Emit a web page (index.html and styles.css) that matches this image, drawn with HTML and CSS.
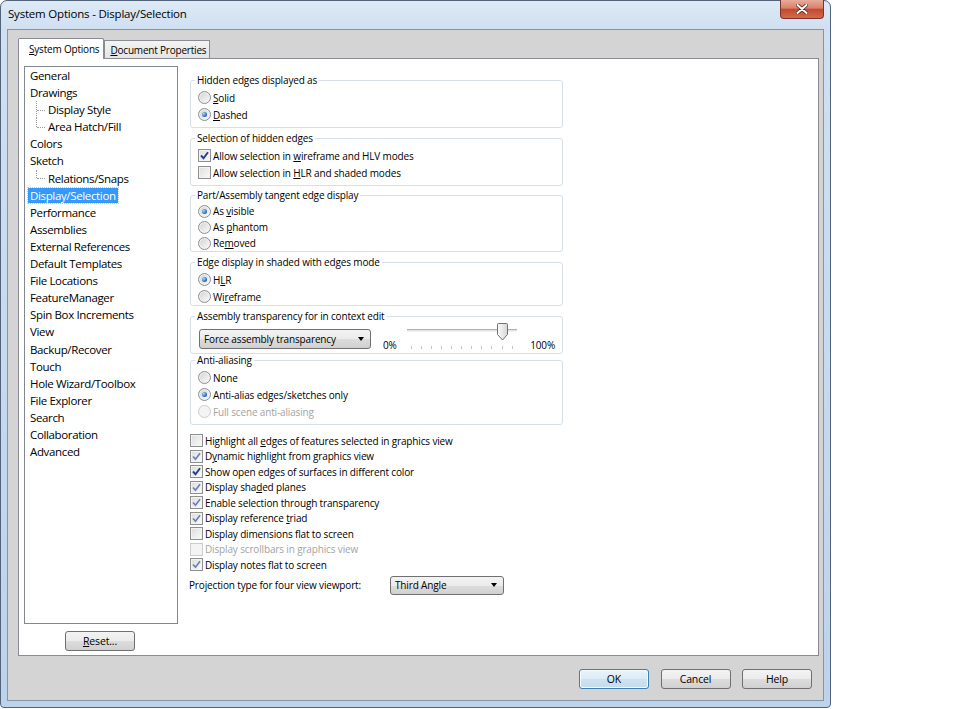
FILE: index.html
```html
<!DOCTYPE html>
<html lang="en">
<head>
  <meta charset="UTF-8" />
  <meta name="viewport" content="width=device-width, initial-scale=1.0"/>
  <title>System Options - Display/Selection</title>
  <link rel="stylesheet" href="styles.css">
</head>
<body>

  <div class="window">
    <div class="titlebar">
      <span class="title">System Options - Display/Selection</span>
      <span class="close">
        <svg width="12" height="10" viewBox="0 0 12 10">
          <path class="x-shadow" d="M1.5 1 L10.5 9 M10.5 1 L1.5 9" />
          <path class="x-mark" d="M1.5 1 L10.5 9 M10.5 1 L1.5 9" />
        </svg>
      </span>
    </div>

    <div class="client">
      <div class="tabs">
        <div class="tab active"><u>S</u>ystem Options</div>
        <div class="tab"><u>D</u>ocument Properties</div>
      </div>

      <div class="page">
        <div class="side">
          <div class="listbox">
            <ul class="tree">
              <li><span>General</span></li>
              <li><span>Drawings</span></li>
              <li class="child"><span>Display Style</span></li>
              <li class="child last"><span>Area Hatch/Fill</span></li>
              <li><span>Colors</span></li>
              <li><span>Sketch</span></li>
              <li class="child last"><span>Relations/Snaps</span></li>
              <li class="selected"><span>Display/Selection</span></li>
              <li><span>Performance</span></li>
              <li><span>Assemblies</span></li>
              <li><span>External References</span></li>
              <li><span>Default Templates</span></li>
              <li><span>File Locations</span></li>
              <li><span>FeatureManager</span></li>
              <li><span>Spin Box Increments</span></li>
              <li><span>View</span></li>
              <li><span>Backup/Recover</span></li>
              <li><span>Touch</span></li>
              <li><span>Hole Wizard/Toolbox</span></li>
              <li><span>File Explorer</span></li>
              <li><span>Search</span></li>
              <li><span>Collaboration</span></li>
              <li><span>Advanced</span></li>
            </ul>
          </div>
          <button class="btn reset"><u>R</u>eset...</button>
        </div>

        <div class="options">
          <fieldset class="group">
            <legend>Hidden edges displayed as</legend>
            <div class="opt"><span class="radio"></span><span><u>S</u>olid</span></div>
            <div class="opt"><span class="radio on"></span><span><u>D</u>ashed</span></div>
          </fieldset>

          <fieldset class="group">
            <legend>Selection of hidden edges</legend>
            <div class="opt"><span class="box strong"><svg viewBox="0 0 11 11"><path d="M2 5.5 L4.5 8.2 L9 2.2"/></svg></span><span>Allow selection in <u>w</u>ireframe and HLV modes</span></div>
            <div class="opt"><span class="box"></span><span>Allow selection in <u>H</u>LR and shaded modes</span></div>
          </fieldset>

          <fieldset class="group tight">
            <legend>Part/Assembly tangent edge display</legend>
            <div class="opt"><span class="radio on"></span><span>As <u>v</u>isible</span></div>
            <div class="opt"><span class="radio"></span><span>As <u>p</u>hantom</span></div>
            <div class="opt"><span class="radio"></span><span>Re<u>m</u>oved</span></div>
          </fieldset>

          <fieldset class="group edges">
            <legend>Edge display in shaded with edges mode</legend>
            <div class="opt"><span class="radio on"></span><span>H<u>L</u>R</span></div>
            <div class="opt"><span class="radio"></span><span>Wi<u>r</u>eframe</span></div>
          </fieldset>

          <fieldset class="group transparency">
            <legend>Assembly transparency for in context edit</legend>
            <div class="slider-row">
              <div class="combo wide"><span>Force assembly transparency</span><span class="arrow"></span></div>
              <span class="pct">0%</span>
              <div class="slider">
                <div class="track"></div>
                <div class="ticks">
                  <i></i><i></i><i></i><i></i><i></i><i></i><i></i><i></i><i></i><i></i><i></i>
                </div>
                <svg class="thumb" width="11" height="18" viewBox="0 0 11 18">
                  <defs>
                    <linearGradient id="thumbfill" x1="0" y1="0" x2="1" y2="0">
                      <stop offset="0" stop-color="#fbfbfb"/>
                      <stop offset="1" stop-color="#d6d6d6"/>
                    </linearGradient>
                  </defs>
                  <path d="M0.5 1.5 Q0.5 0.5 1.5 0.5 H9.5 Q10.5 0.5 10.5 1.5 V11.5 L5.5 17 L0.5 11.5 Z" fill="url(#thumbfill)" stroke="#6f6f6f"/>
                </svg>
              </div>
              <span class="pct full">100%</span>
            </div>
          </fieldset>

          <fieldset class="group antialias">
            <legend>Anti-aliasing</legend>
            <div class="opt"><span class="radio"></span><span>None</span></div>
            <div class="opt"><span class="radio on"></span><span>Anti-alias edges/sketches only</span></div>
            <div class="opt disabled"><span class="radio"></span><span>Full scene anti-aliasing</span></div>
          </fieldset>

          <div class="checks">
            <div class="chk"><span class="box"></span><span>Highlight all <u>e</u>dges of features selected in graphics view</span></div>
            <div class="chk"><span class="box"><svg viewBox="0 0 11 11"><path d="M2 5.5 L4.5 8.2 L9 2.2"/></svg></span><span>D<u>y</u>namic highlight from graphics view</span></div>
            <div class="chk"><span class="box strong"><svg viewBox="0 0 11 11"><path d="M2 5.5 L4.5 8.2 L9 2.2"/></svg></span><span>Show open edges of surfaces in different color</span></div>
            <div class="chk"><span class="box"><svg viewBox="0 0 11 11"><path d="M2 5.5 L4.5 8.2 L9 2.2"/></svg></span><span>Display sha<u>d</u>ed planes</span></div>
            <div class="chk"><span class="box"><svg viewBox="0 0 11 11"><path d="M2 5.5 L4.5 8.2 L9 2.2"/></svg></span><span>Enable selection through transparency</span></div>
            <div class="chk"><span class="box"><svg viewBox="0 0 11 11"><path d="M2 5.5 L4.5 8.2 L9 2.2"/></svg></span><span>Display reference <u>t</u>riad</span></div>
            <div class="chk"><span class="box"></span><span>Display dimensions flat to screen</span></div>
            <div class="chk disabled"><span class="box"></span><span>Display scrollbars in graphics view</span></div>
            <div class="chk"><span class="box"><svg viewBox="0 0 11 11"><path d="M2 5.5 L4.5 8.2 L9 2.2"/></svg></span><span>Display notes flat to screen</span></div>
          </div>

          <div class="projection">
            <span>Projection type for four view viewport:</span>
            <div class="combo"><span>Third Angle</span><span class="arrow"></span></div>
          </div>
        </div>
      </div>

      <div class="buttons">
        <button class="btn default">OK</button>
        <button class="btn">Cancel</button>
        <button class="btn">Help</button>
      </div>
    </div>
  </div>

</body>
</html>
```

FILE: styles.css
```css
* {
  box-sizing: border-box;
}

body {
  margin: 0;
  background: #fff;
  color: #000;
  font-family: "Open Sans", "Noto Sans", sans-serif;
  font-size: 10px;
  letter-spacing: -0.15px;
}

u {
  text-decoration: underline;
  text-underline-offset: 1px;
}

/* window frame */
.window {
  width: 831px;
  height: 708px;
  border: 1px solid #52647c;
  border-radius: 7px 7px 4px 4px;
  background: linear-gradient(to bottom, #dde9f5 0, #d0e0f1 28px, #bdd3eb 100%);
  display: flex;
  flex-direction: column;
}

.titlebar {
  height: 28px;
  display: flex;
  align-items: flex-start;
  padding: 0 6px;
}

.title {
  font-size: 11.5px;
  line-height: 26px;
  padding-left: 1px;
  letter-spacing: -0.2px;
}

.close {
  margin-left: auto;
  margin-top: -1px;
  width: 44px;
  height: 19px;
  border: 1px solid #7c3328;
  border-top: none;
  border-radius: 0 0 4px 4px;
  background: linear-gradient(#e9ab9b 0, #d9806a 45%, #c24a32 52%, #d2694c 100%);
  display: flex;
  align-items: center;
  justify-content: center;
}

.close path {
  fill: none;
  stroke-linecap: round;
}

.close .x-shadow {
  stroke: #5e2018;
  stroke-width: 3.6;
}

.close .x-mark {
  stroke: #fff;
  stroke-width: 2;
}

/* client area */
.client {
  flex: 1;
  margin: 0 6px 6px;
  border: 1px solid #8595a9;
  background: #d4d4d4;
  padding: 8px 3px 0 10px;
  display: flex;
  flex-direction: column;
}

.tabs {
  display: flex;
  align-items: flex-end;
  height: 20px;
}

.tab {
  height: 18px;
  padding: 0 3px 0 5px;
  border: 1px solid #898c95;
  border-bottom: none;
  background: linear-gradient(#f4f4f4, #e4e4e4);
  line-height: 18px;
  letter-spacing: -0.2px;
  white-space: nowrap;
}

.tab.active {
  height: 21px;
  margin-bottom: -1px;
  padding: 0 4px 0 10px;
  background: #fff;
  line-height: 20px;
  position: relative;
  z-index: 1;
  border-radius: 2px 2px 0 0;
}

.page {
  width: 801px;
  height: 598px;
  border: 1px solid #898c95;
  background: #fff;
  padding: 7px 0 0 5px;
  display: flex;
}

/* left tree */
.side {
  width: 154px;
  display: flex;
  flex-direction: column;
  align-items: center;
}

.listbox {
  width: 154px;
  height: 558px;
  border: 1px solid #828790;
  background: #fff;
}

.tree {
  list-style: none;
  margin: 0;
  padding: 0 0 0 3px;
  font-size: 11.5px;
  letter-spacing: -0.35px;
}

.tree li {
  position: relative;
  height: 17.1px;
  line-height: 17.1px;
  white-space: nowrap;
}

.tree li span {
  padding: 0 2px;
}

.tree .child {
  padding-left: 18px;
}

.tree .child::before {
  content: '';
  position: absolute;
  left: 8px;
  top: 0;
  bottom: 0;
  border-left: 1px dotted #9a9a9a;
}

.tree .child.last::before {
  bottom: 50%;
}

.tree .child::after {
  content: '';
  position: absolute;
  left: 9px;
  width: 8px;
  top: 50%;
  border-top: 1px dotted #9a9a9a;
}

.tree .selected span {
  display: inline-block;
  line-height: 15px;
  background: #3399ff;
  color: #fff;
  outline: 1px dotted #d9c98a;
}

.btn {
  width: 70px;
  height: 20px;
  border: 1px solid #707070;
  border-radius: 3px;
  background: linear-gradient(#f3f3f3 0, #ebebeb 50%, #dddddd 50%, #d0d0d0 100%);
  font-family: inherit;
  font-size: 10.5px;
  letter-spacing: -0.15px;
  color: #000;
  padding: 0;
}

.reset {
  margin-top: 7px;
  margin-right: 2px;
}

/* right options */
.options {
  margin-left: 12px;
  padding-top: 8px;
  display: flex;
  flex-direction: column;
  align-items: flex-start;
}

.group {
  width: 373px;
  margin: 0;
  padding: 2px 7px 4px;
  border: 1px solid #d5dfe5;
  border-radius: 3px;
}

.group + .group {
  margin-top: 4px;
}

.group legend {
  padding: 0 2px;
  margin-left: -3px;
  line-height: 13px;
}

.group.tight {
  margin-top: 3px;
  padding-top: 1px;
  padding-bottom: 0;
}

.group.tight .opt {
  height: 16px;
}

.group.edges {
  padding-bottom: 0;
}

.opt,
.chk {
  display: flex;
  align-items: center;
  gap: 2px;
  height: 17px;
  white-space: nowrap;
}

.disabled {
  color: #a3a3a3;
}

.radio {
  position: relative;
  flex: none;
  width: 13px;
  height: 13px;
  border: 1px solid #8c8e8f;
  border-radius: 50%;
  background: linear-gradient(135deg, #d2d2d2, #fbfbfb);
  box-shadow: inset 0 0 0 1px #f2f2f2;
}

.radio.on::after {
  content: '';
  position: absolute;
  left: 3px;
  top: 3px;
  width: 5px;
  height: 5px;
  border-radius: 50%;
  background: radial-gradient(circle at 35% 35%, #a8d6ff, #2a72c2 60%, #0f3f7a);
}

.disabled .radio,
.disabled .box {
  border-color: #cdcdcd;
  background: #f4f4f4;
  box-shadow: none;
}

.box {
  flex: none;
  width: 13px;
  height: 13px;
  border: 1px solid #8e8f8f;
  background: linear-gradient(135deg, #dcdcdc, #fbfbfb);
  box-shadow: inset 0 0 0 1px #f3f3f3;
  display: flex;
  align-items: center;
  justify-content: center;
}

.box svg {
  width: 11px;
  height: 11px;
}

.box path {
  fill: none;
  stroke: #6e80bd;
  stroke-width: 1.7;
}

.box.strong path {
  stroke: #1f3f93;
  stroke-width: 1.9;
}

/* transparency row */
.group.transparency {
  padding-top: 0;
  padding-bottom: 3px;
}

.slider-row {
  display: flex;
  align-items: flex-end;
  height: 27px;
}

.combo {
  display: flex;
  align-items: center;
  height: 20px;
  border: 1px solid #707070;
  border-radius: 3px;
  background: linear-gradient(#f3f3f3 0, #ebebeb 50%, #dddddd 50%, #d0d0d0 100%);
  padding: 0 6px 0 4px;
  white-space: nowrap;
}

.combo.wide {
  width: 172px;
  margin-left: 1px;
  margin-bottom: 1px;
}

.combo .arrow {
  margin-left: auto;
  width: 0;
  height: 0;
  border-left: 3.5px solid transparent;
  border-right: 3.5px solid transparent;
  border-top: 4px solid #000;
}

.pct {
  margin-left: 12px;
  margin-bottom: -2px;
  line-height: 13px;
}

.pct.full {
  margin-left: auto;
}

.slider {
  position: relative;
  width: 110px;
  height: 27px;
  margin-left: 10px;
}

.track {
  margin-top: 6px;
  height: 3px;
  border-top: 1px solid #b4b4b4;
  border-bottom: 1px solid #f4f4f4;
  background: #e2e2e2;
}

.ticks {
  display: flex;
  justify-content: space-between;
  margin: 14px 4px 0;
}

.ticks i {
  width: 1px;
  height: 3px;
  background: #c4c4c4;
}

.thumb {
  position: absolute;
  left: 90px;
  top: 0;
}

.group.antialias {
  margin-top: 0;
  padding-top: 2px;
}

/* checkbox list */
.checks {
  margin-top: 8px;
}

.chk {
  height: 15.5px;
}

.projection {
  display: flex;
  align-items: center;
  margin-top: 3px;
  margin-left: -1px;
  height: 19px;
  white-space: nowrap;
}

.projection .combo {
  width: 114px;
  height: 19px;
  margin-left: auto;
}

.projection span:first-child {
  width: 201px;
}

/* dialog buttons */
.buttons {
  display: flex;
  justify-content: flex-end;
  gap: 11.5px;
  margin-top: 13px;
  padding-right: 8px;
}

.btn.default {
  border-color: #3c7fb1;
  background: linear-gradient(#e9f3fa 0, #dcebf6 50%, #cde2f1 50%, #c5ddee 100%);
  box-shadow: inset 0 0 0 1px #f6fbfe;
}
```
